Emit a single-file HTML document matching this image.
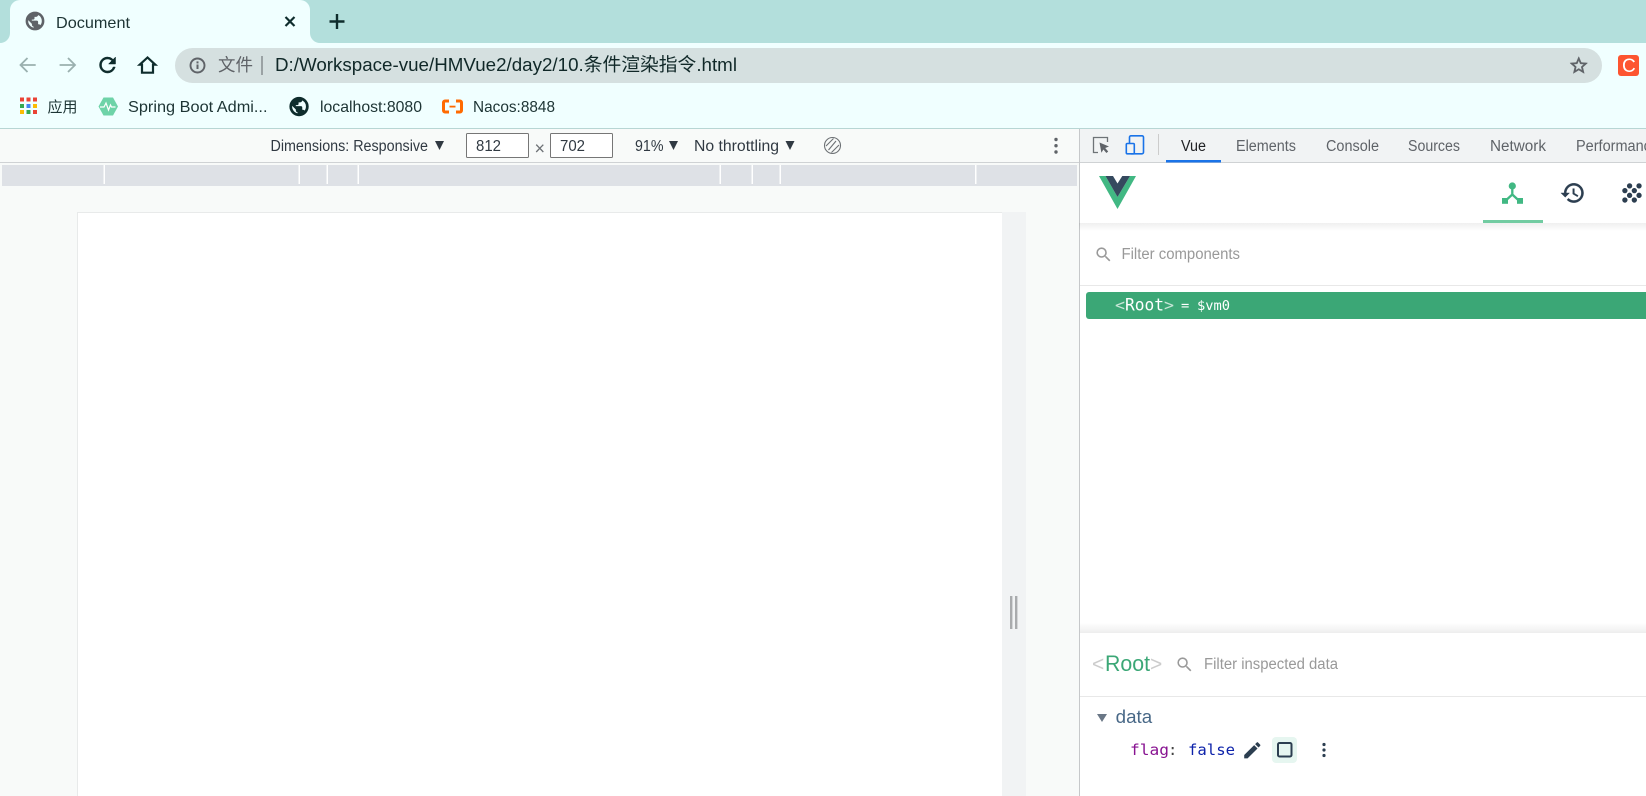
<!DOCTYPE html>
<html lang="zh"><head><meta charset="utf-8"><title>Document</title>
<style>
html,body{margin:0;padding:0;width:1646px;height:796px;overflow:hidden;background:#fff}
svg{display:block}
text{font-family:"Liberation Sans","Noto Sans CJK SC",sans-serif}
.m{font-family:"DejaVu Sans Mono","Liberation Mono",monospace}
</style></head><body>
<svg width="1646" height="796" viewBox="0 0 1646 796" xmlns="http://www.w3.org/2000/svg">
<defs>
<linearGradient id="sd" x1="0" y1="0" x2="0" y2="1"><stop offset="0" stop-color="#000" stop-opacity=".06"/><stop offset="1" stop-color="#000" stop-opacity="0"/></linearGradient>
<linearGradient id="su" x1="0" y1="0" x2="0" y2="1"><stop offset="0" stop-color="#000" stop-opacity="0"/><stop offset="1" stop-color="#000" stop-opacity=".07"/></linearGradient>
<path id="globe" d="M12 2C6.48 2 2 6.48 2 12s4.48 10 10 10 10-4.48 10-10S17.52 2 12 2zm-1 17.93c-3.95-.49-7-3.85-7-7.93 0-.62.08-1.21.21-1.79L9 15v1c0 1.1.9 2 2 2v1.93zm6.9-2.54c-.26-.81-1-1.39-1.9-1.39h-1v-3c0-.55-.45-1-1-1H8v-2h2c.55 0 1-.45 1-1V7h2c1.1 0 2-.9 2-2v-.41c2.93 1.19 5 4.06 5 7.41 0 2.08-.8 3.97-2.1 5.39z"/>
<path id="search" d="M15.5 14h-.79l-.28-.27A6.471 6.471 0 0 0 16 9.5 6.5 6.5 0 1 0 9.5 16c1.61 0 3.09-.59 4.23-1.57l.27.28v.79l5 4.99L20.49 19l-4.99-5zm-6 0C7.01 14 5 11.99 5 9.5S7.01 5 9.5 5 14 7.01 14 9.5 11.99 14 9.5 14z"/>
</defs>

<!-- browser chrome -->
<rect width="1646" height="43" fill="#b3dfdc"/>
<rect y="43" width="1646" height="85" fill="#f0ffff"/>
<rect y="128" width="1646" height="1" fill="#b7d6d4"/>
<path d="M0 43a10 10 0 0 0 10-10V10A10 10 0 0 1 20 0H300a10 10 0 0 1 10 10V33a10 10 0 0 0 10 10z" fill="#f0ffff"/>
<use href="#globe" transform="translate(24.2 10.2) scale(.9)" fill="#5f6368" stroke="#5f6368" stroke-width=".9"/>
<text x="56" y="28" font-size="16" fill="#1d3434" textLength="74" lengthAdjust="spacingAndGlyphs">Document</text>
<path d="M285.500 17l9 9M294.500 17l-9 9" stroke="#0f2d2d" stroke-width="2.200" fill="none"/>
<path d="M337 14v15M329.500 21.500h15" stroke="#0f2d2d" stroke-width="2.400" fill="none"/>

<path d="M35.700 65H21M27.500 58l-7 7 7 7" stroke="#9ab0af" stroke-width="1.800" fill="none"/>
<path d="M59.600 65h15M68 58l7 7-7 7" stroke="#9ab0af" stroke-width="1.800" fill="none"/>
<path transform="translate(95.500 53)" stroke="#0f2d2d" stroke-width=".5" d="M17.65 6.350A7.958 7.958 0 0 0 12 4c-4.420 0-7.990 3.580-7.990 8s3.570 8 7.990 8c3.730 0 6.840-2.550 7.730-6h-2.080A5.990 5.990 0 0 1 12 18c-3.310 0-6-2.690-6-6s2.690-6 6-6c1.660 0 3.140.69 4.220 1.780L13 11h7V4l-2.350 2.350z" fill="#0f2d2d"/>
<path d="M147.500 57.500l-7.800 7.200h2.300v8h11v-8h2.300z" stroke="#0f2d2d" stroke-width="2.200" fill="none" stroke-linejoin="miter"/>

<rect x="175" y="48" width="1427" height="35" rx="17.500" fill="#d5e0e0"/>
<circle cx="197.500" cy="65.500" r="7" fill="none" stroke="#5f6368" stroke-width="1.900"/>
<rect x="196.500" y="64.500" width="2" height="4.500" fill="#5f6368"/><rect x="196.500" y="61.400" width="2" height="2" fill="#5f6368"/>
<text x="218" y="71" font-size="17.500" fill="#5f6368" textLength="35">文件</text>
<rect x="261.500" y="56" width="1" height="19" fill="#5f6368"/>
<text x="275" y="71" font-size="18.500" fill="#102828" textLength="462" lengthAdjust="spacingAndGlyphs">D:/Workspace-vue/HMVue2/day2/10.条件渲染指令.html</text>
<path transform="translate(1568.200 54.900) scale(.88)" stroke="#5f6368" stroke-width=".5" d="M22 9.240l-7.190-.62L12 2 9.190 8.630 2 9.240l5.460 4.730L5.820 21 12 17.270 18.180 21l-1.630-7.030L22 9.240zM12 15.400l-3.760 2.270 1-4.280-3.320-2.880 4.380-.38L12 6.100l1.710 4.040 4.380.38-3.320 2.880 1 4.280L12 15.400z" fill="#5f6368"/>
<rect x="1618" y="55" width="21" height="21" rx="3" fill="#fd5530"/>
<text x="1622" y="72" font-size="19" fill="#fff">C</text>

<!-- bookmarks -->
<g>
<rect x="20" y="97.500" width="4" height="4" fill="#ea4335"/><rect x="26.500" y="97.500" width="4" height="4" fill="#ea4335"/><rect x="33" y="97.500" width="4" height="4" fill="#ea4335"/>
<rect x="20" y="104" width="4" height="4" fill="#34a853"/><rect x="26.500" y="104" width="4" height="4" fill="#4285f4"/><rect x="33" y="104" width="4" height="4" fill="#fbbc05"/>
<rect x="20" y="110" width="4" height="4" fill="#fbbc05"/><rect x="26.500" y="110" width="4" height="4" fill="#34a853"/><rect x="33" y="110" width="4" height="4" fill="#ea4335"/>
</g>
<text x="47.500" y="112" font-size="15" fill="#1d3434" textLength="30">应用</text>
<path d="M103.500 97.500h9.500l5 9-5 9h-9.500l-5-9z" fill="#6ed3a8"/>
<path d="M100 107h4l2-4 2.500 7 2-5 1 2h4" stroke="#fff" stroke-width="1.200" fill="none"/>
<text x="128" y="112" font-size="16" fill="#1d3434" textLength="139.500" lengthAdjust="spacingAndGlyphs">Spring Boot Admi...</text>
<use href="#globe" transform="translate(288 95.500) scale(.92)" fill="#0f2d2d" stroke="#0f2d2d" stroke-width="1"/>
<text x="320" y="112" font-size="16" fill="#1d3434" textLength="102" lengthAdjust="spacingAndGlyphs">localhost:8080</text>
<path d="M449 101h-4a1.500 1.500 0 0 0-1.500 1.500v8a1.500 1.500 0 0 0 1.500 1.500h4M456 101h4a1.500 1.500 0 0 1 1.500 1.500v8a1.500 1.500 0 0 1-1.500 1.500h-4" stroke="#ff6a00" stroke-width="3" fill="none"/>
<rect x="449.500" y="105.700" width="6" height="1.800" fill="#ff6a00"/>
<text x="473" y="112" font-size="16" fill="#1d3434" textLength="82" lengthAdjust="spacingAndGlyphs">Nacos:8848</text>

<!-- device toolbar + viewport -->
<rect y="129" width="1079" height="667" fill="#f8faf9"/>
<rect y="162" width="1079" height="1" fill="#cfd2d4"/>
<text x="270.500" y="151" font-size="15.500" fill="#303942" textLength="157.500" lengthAdjust="spacingAndGlyphs">Dimensions: Responsive</text>
<path d="M435 141h9l-4.500 9z" fill="#303942"/>
<rect x="466.500" y="133.500" width="62" height="24" rx="1" fill="#fff" stroke="#767676"/>
<text x="476" y="151" font-size="15.500" fill="#303942" textLength="25" lengthAdjust="spacingAndGlyphs">812</text>
<text x="534.500" y="154.500" font-size="18" fill="#6d7175">×</text>
<rect x="550.500" y="133.500" width="62" height="24" rx="1" fill="#fff" stroke="#767676"/>
<text x="560" y="151" font-size="15.500" fill="#303942" textLength="25" lengthAdjust="spacingAndGlyphs">702</text>
<text x="635" y="151" font-size="15.500" fill="#303942" textLength="28.500" lengthAdjust="spacingAndGlyphs">91%</text>
<path d="M669 141h9l-4.500 9z" fill="#303942"/>
<text x="694" y="151" font-size="15.500" fill="#303942" textLength="85" lengthAdjust="spacingAndGlyphs">No throttling</text>
<path d="M785.500 141h9l-4.500 9z" fill="#303942"/>
<circle cx="832.500" cy="145.500" r="8" fill="none" stroke="#6d7175" stroke-width="1.100"/>
<path d="M826 146l7.500-7.500M831.500 152.500l7.500-7.500M828.500 150l7.500-9" fill="none" stroke="#6d7175" stroke-width="1.100"/>
<circle cx="1056" cy="139.500" r="1.700" fill="#5f6368"/><circle cx="1056" cy="145.700" r="1.700" fill="#5f6368"/><circle cx="1056" cy="152" r="1.700" fill="#5f6368"/>

<rect x="2" y="165" width="1075" height="21" fill="#dee1e6"/>
<g fill="#fff">
<rect x="103.500" y="165" width="1.500" height="19"/><rect x="298.500" y="165" width="1.500" height="19"/><rect x="326.500" y="165" width="1.500" height="19"/><rect x="357.500" y="165" width="1.500" height="19"/><rect x="719.500" y="165" width="1.500" height="19"/><rect x="751.500" y="165" width="1.500" height="19"/><rect x="779.500" y="165" width="1.500" height="19"/><rect x="975" y="165" width="1.500" height="19"/>
</g>

<rect x="77" y="212" width="925" height="584" fill="#fff"/>
<path d="M77.500 796V212.500H1002" fill="none" stroke="#e8eaea"/>
<rect x="1002" y="212" width="24" height="584" fill="#f1f3f4"/>
<rect x="1010" y="596" width="2.400" height="33" fill="#a9abad"/>
<rect x="1015" y="596" width="2.400" height="33" fill="#a9abad"/>

<!-- devtools tab bar -->
<rect x="1079" y="129" width="567" height="667" fill="#fff"/>
<rect x="1079" y="129" width="567" height="33" fill="#f1f3f4"/>
<rect x="1079" y="162" width="567" height="1" fill="#cfd2d4"/>
<rect x="1079" y="129" width="1" height="667" fill="#c6c8ca"/>
<path d="M1098 152.500h-4.500v-15h14v4.500" fill="none" stroke="#6e7377" stroke-width="1.300"/>
<path d="M1099.500 142.500l9.500 4-3.800 1.500 3 3.500-1.800 1.500-3-3.500-2 3.200z" fill="#5f6368"/>
<rect x="1129.500" y="135.800" width="14" height="18" rx="1.500" fill="none" stroke="#1a73e8" stroke-width="1.600"/>
<rect x="1126.300" y="143.500" width="8" height="10.300" rx="1" fill="#f1f3f4" stroke="#1a73e8" stroke-width="1.600"/>
<rect x="1158" y="134" width="1" height="21" fill="#ccc"/>
<text x="1181" y="151" font-size="15.500" fill="#202124" textLength="25" lengthAdjust="spacingAndGlyphs">Vue</text>
<rect x="1166" y="160" width="55" height="2.500" fill="#1a73e8"/>
<g font-size="15.500" fill="#5f6368">
<text x="1236" y="151" textLength="60" lengthAdjust="spacingAndGlyphs">Elements</text>
<text x="1326" y="151" textLength="53" lengthAdjust="spacingAndGlyphs">Console</text>
<text x="1408" y="151" textLength="52" lengthAdjust="spacingAndGlyphs">Sources</text>
<text x="1490" y="151" textLength="56" lengthAdjust="spacingAndGlyphs">Network</text>
<text x="1576" y="151" textLength="83" lengthAdjust="spacingAndGlyphs">Performance</text>
</g>

<!-- vue header -->
<path d="M1099 176h6.500l12 21 12.500-21h6l-18.500 33z" fill="#41b883"/>
<path d="M1105.500 176h7.500l4.500 7.500 4.800-7.500h7.700l-12.500 21z" fill="#35495e"/>
<rect x="1079" y="223" width="567" height="8" fill="url(#sd)"/>
<circle cx="1512.300" cy="186" r="3.600" fill="#41b883"/>
<path d="M1512.300 188v6.500l-6.500 6M1512.300 194.500l6.500 6" fill="none" stroke="#41b883" stroke-width="2.300"/>
<rect x="1502" y="198" width="6" height="5.800" fill="#41b883"/><rect x="1517" y="198" width="6" height="5.800" fill="#41b883"/>
<rect x="1483" y="220" width="60" height="3" fill="#72cca2"/>
<path transform="translate(1559.800 180) scale(1.080)" fill="#2c3e50" stroke="#2c3e50" stroke-width=".35" d="M13 3a9 9 0 0 0-9 9H1l3.890 3.890.07.14L9 12H6c0-3.870 3.130-7 7-7s7 3.130 7 7-3.130 7-7 7c-1.930 0-3.680-.79-4.940-2.060l-1.420 1.420C8.270 19.990 10.510 21 13 21c4.970 0 9-4.030 9-9s-4.030-9-9-9zm-1 5v5l4.280 2.540.72-1.210-3.500-2.080V8H12z"/>
<path transform="translate(1617.800 178.800) scale(1.180)" fill="#2c3e50" stroke="#2c3e50" stroke-width=".5" d="M10 12c-1.100 0-2 .9-2 2s.9 2 2 2 2-.9 2-2-.9-2-2-2zM6 8c-1.100 0-2 .9-2 2s.9 2 2 2 2-.9 2-2-.9-2-2-2zm0 8c-1.100 0-2 .9-2 2s.9 2 2 2 2-.9 2-2-.9-2-2-2zm12-8c1.100 0 2-.9 2-2s-.9-2-2-2-2 .9-2 2 .9 2 2 2zm-4 8c-1.100 0-2 .9-2 2s.9 2 2 2 2-.9 2-2-.9-2-2-2zm4-4c-1.100 0-2 .9-2 2s.9 2 2 2 2-.9 2-2-.9-2-2-2zm-4-4c-1.100 0-2 .9-2 2s.9 2 2 2 2-.9 2-2-.9-2-2-2zm-4-4c-1.100 0-2 .9-2 2s.9 2 2 2 2-.9 2-2-.9-2-2-2z"/>

<!-- filter components -->
<use href="#search" transform="translate(1094 245) scale(.8)" fill="#999"/>
<text x="1121.500" y="259" font-size="15.500" fill="#999" textLength="118.500" lengthAdjust="spacingAndGlyphs">Filter components</text>
<rect x="1080" y="285" width="566" height="1" fill="#e8e8e8"/>

<!-- root row -->
<path d="M1646 292H1089a3 3 0 0 0-3 3v21a3 3 0 0 0 3 3H1646z" fill="#3ba776"/>
<text class="m" x="1115" y="310.500" font-size="16" fill="#c9e6d8" textLength="10" lengthAdjust="spacingAndGlyphs">&lt;</text>
<text class="m" x="1125" y="310.500" font-size="17" fill="#fff" textLength="39" lengthAdjust="spacingAndGlyphs">Root</text>
<text class="m" x="1164" y="310.500" font-size="16" fill="#c9e6d8" textLength="10" lengthAdjust="spacingAndGlyphs">&gt;</text>
<text class="m" x="1181" y="310" font-size="13.700" fill="#fff">=</text>
<text class="m" x="1197" y="310" font-size="13.700" fill="#fff" textLength="33" lengthAdjust="spacingAndGlyphs">$vm0</text>

<!-- inspector -->
<rect x="1080" y="623" width="566" height="10" fill="url(#su)"/>
<rect x="1080" y="633" width="566" height="163" fill="#fff"/>
<text x="1092" y="671" font-size="21" fill="#ccc">&lt;</text>
<text x="1105" y="671" font-size="22" fill="#3ba776" textLength="45" lengthAdjust="spacingAndGlyphs">Root</text>
<text x="1150" y="671" font-size="21" fill="#ccc">&gt;</text>
<use href="#search" transform="translate(1175 655) scale(.8)" fill="#999"/>
<text x="1204" y="669" font-size="15.500" fill="#999" textLength="134" lengthAdjust="spacingAndGlyphs">Filter inspected data</text>
<rect x="1080" y="696" width="566" height="1" fill="#e8e8e8"/>
<path d="M1097 714h10l-5 8z" fill="#6a7786"/>
<text x="1115.700" y="723" font-size="18" fill="#486887" textLength="36.500" lengthAdjust="spacingAndGlyphs">data</text>
<text class="m" x="1130" y="755" font-size="15.500" fill="#881391" textLength="39" lengthAdjust="spacingAndGlyphs">flag</text>
<text class="m" x="1168" y="755" font-size="15.500" fill="#444">:</text>
<text class="m" x="1188" y="755" font-size="15.500" fill="#0d22aa" textLength="47" lengthAdjust="spacingAndGlyphs">false</text>
<path transform="translate(1241.500 739.500) scale(.9)" fill="#2c3e50" d="M3 17.250V21h3.750L17.810 9.940l-3.750-3.750L3 17.250zM20.710 7.040a1 1 0 0 0 0-1.410l-2.340-2.340a1 1 0 0 0-1.410 0l-1.830 1.830 3.750 3.750 1.830-1.830z"/>
<rect x="1272" y="737" width="25" height="26" rx="4" fill="#e6f6f0"/>
<rect x="1278" y="743" width="13.500" height="13.500" rx="1.500" fill="none" stroke="#2c3e50" stroke-width="2"/>
<circle cx="1324" cy="744.500" r="1.600" fill="#2c3e50"/><circle cx="1324" cy="750" r="1.600" fill="#2c3e50"/><circle cx="1324" cy="755.500" r="1.600" fill="#2c3e50"/>
</svg>
</body></html>
